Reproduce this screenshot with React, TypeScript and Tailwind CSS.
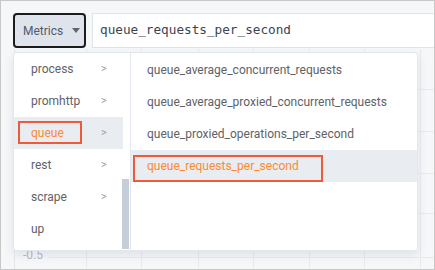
import { useState } from "react";

const groups = [
  { name: "process", sub: true },
  { name: "promhttp", sub: true },
  { name: "queue", sub: true },
  { name: "rest", sub: true },
  { name: "scrape", sub: true },
  { name: "up", sub: false },
];

const metrics = [
  "queue_average_concurrent_requests",
  "queue_average_proxied_concurrent_requests",
  "queue_proxied_operations_per_second",
  "queue_requests_per_second",
];

function ChartGrid() {
  const xs = [85, 140, 197, 252, 308, 363, 419];
  const ys = [88, 130, 172, 212, 256];
  return (
    <svg className="absolute left-0 top-0" width="435" height="270" aria-hidden="true">
      <line x1="13.5" y1="48" x2="13.5" y2="270" stroke="#e3e6eb" />
      {xs.map((x) => (
        <line key={x} x1={x + 0.5} y1="48" x2={x + 0.5} y2="270" stroke="#e8eaee" />
      ))}
      {ys.map((y) => (
        <line key={y} x1={y === 256 ? 48 : 13} y1={y + 0.5} x2="435" y2={y + 0.5} stroke="#e8eaee" />
      ))}
    </svg>
  );
}

export default function App() {
  const [group] = useState("queue");
  const [metric] = useState("queue_requests_per_second");

  return (
    <div className="relative h-[270px] w-[435px] overflow-hidden border border-[#c8c8c8] bg-[#f6f7f9] font-['Roboto','Liberation_Sans',sans-serif]">
      <ChartGrid />
      <span className="absolute left-[22px] top-[248px] text-[12px] leading-none text-[#b4b8bf]">-0.5</span>

      <div className="relative flex items-stretch gap-[6px] pl-[12px] pt-[12px]">
        <button className="flex h-[35px] w-[73px] items-center gap-[9px] rounded-[4px] border-2 border-[#1c1c1c] bg-[#dfe4ec] pl-[8px] text-[12px] text-[#4f5b6e]">
          Metrics
          <span className="h-0 w-0 border-x-[4px] border-t-[5px] border-x-transparent border-t-[#5b6574]" />
        </button>
        <div className="flex h-[35px] flex-1 items-center border border-r-0 border-[#dfe3ea] bg-white pb-[1px] pl-[7px] font-['DejaVu_Sans_Mono',monospace] text-[12.7px] text-[#3c4452]">
          {metric}
        </div>
      </div>

      <div className="absolute left-[12px] top-[51px] flex h-[199px] rounded-[3px] border border-[#e4e7ed] bg-white shadow-[0_4px_10px_rgba(120,130,150,0.18)]">
        <div className="relative w-[117px] border-r border-[#e4e7ed]">
          {groups.map((g) => {
            const active = g.name === group;
            return (
              <div
                key={g.name}
                className={`relative flex h-[32px] w-[109px] items-center pl-[17px] text-[12px] ${
                  active ? "bg-[#e9ecf1] text-[#fb8a35]" : "text-[#606266]"
                }`}
              >
                {active && (
                  <span className="absolute left-[4px] top-[4px] h-[23px] w-[64px] border-2 border-[#ef5a38]" />
                )}
                <span className="relative">{g.name}</span>
                {g.sub && <span className="absolute left-[87px] text-[11px] text-[#9a9ea5]">&gt;</span>}
              </div>
            );
          })}
          <div className="absolute right-[1px] top-[126px] h-[70px] w-[7px] bg-[#c6cfd8]" />
        </div>
        <div className="w-[286px] pt-[1px]">
          {metrics.map((m) => {
            const active = m === metric;
            return (
              <div
                key={m}
                className={`relative flex h-[32px] items-center pl-[16px] text-[12px] ${
                  active ? "bg-[#e9ecf1] text-[#fb8a35]" : "text-[#606266]"
                }`}
              >
                {active && (
                  <span className="absolute left-[2px] top-[5px] h-[27px] w-[190px] border-2 border-[#ef5a38]" />
                )}
                <span className="relative">{m}</span>
              </div>
            );
          })}
        </div>
      </div>
    </div>
  );
}
